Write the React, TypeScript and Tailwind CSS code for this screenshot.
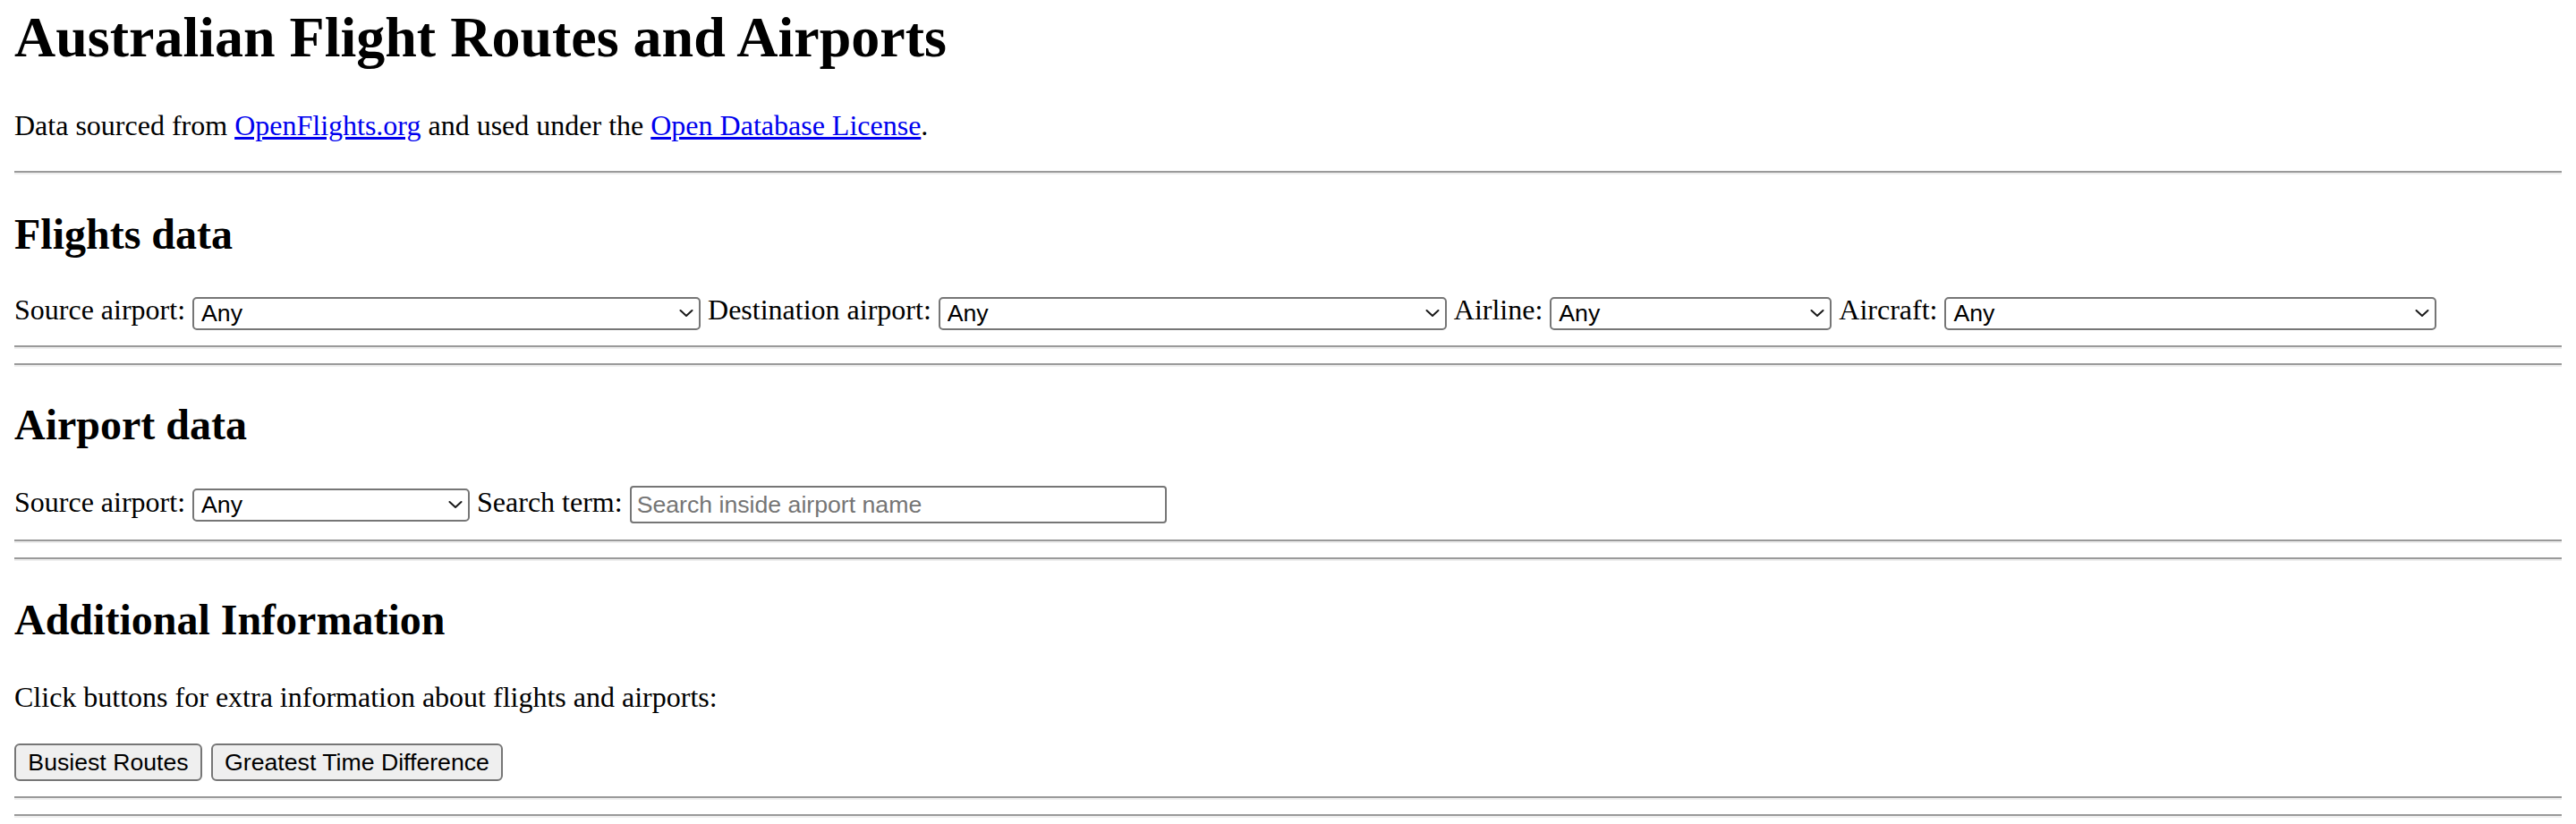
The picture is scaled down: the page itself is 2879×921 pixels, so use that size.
import React from "react";

function Chevron() {
  return (
    <svg
      className="pointer-events-none absolute right-[8px] top-1/2 h-[9px] w-[16px] -translate-y-1/2"
      viewBox="0 0 16 9"
      fill="none"
    >
      <path d="M1.5 1.5 L8 7.5 L14.5 1.5" stroke="#1a1a1a" strokeWidth="2" strokeLinecap="round" strokeLinejoin="round" />
    </svg>
  );
}

function Select({ w, mt }: { w: string; mt: string }) {
  return (
    <div className={`relative ${w} ${mt}`}>
      <select className="block h-[36.5px] w-full appearance-none rounded-[5px] border-2 border-[#767676] bg-white pl-[8px] pr-[30px] font-['Liberation_Sans',Arial,sans-serif] text-[26.67px] leading-[30px] text-black outline-none">
        <option>Any</option>
      </select>
      <Chevron />
    </div>
  );
}

function Hr({ mt }: { mt: string }) {
  return <hr className={`${mt} h-0 border-x-0 border-t-2 border-b-2 border-t-[#9a9a9a] border-b-[#eeeeee]`} />;
}

export default function App() {
  return (
    <div className="min-h-screen bg-white px-[16px] font-['Liberation_Serif','Times_New_Roman',serif] text-black">
      <h1 className="pt-[6px] text-[64px] font-bold leading-[72px]">Australian Flight Routes and Airports</h1>
      <p className="mt-[44px] text-[32px] leading-[36px]">
        Data sourced from{" "}
        <a href="#" className="text-[#0000ee] underline">
          OpenFlights.org
        </a>{" "}
        and used under the{" "}
        <a href="#" className="text-[#0000ee] underline">
          Open Database License
        </a>
        .
      </p>
      <Hr mt="mt-[33px]" />

      <h2 className="mt-[39px] text-[48px] font-bold leading-[56px]">Flights data</h2>
      <div className="mt-[38px] flex h-[42px] items-start gap-[8px] whitespace-nowrap text-[32px] leading-[36px]">
        <span>Source airport:</span>
        <Select w="w-[568px]" mt="mt-[4px]" />
        <span>Destination airport:</span>
        <Select w="w-[568px]" mt="mt-[4px]" />
        <span>Airline:</span>
        <Select w="w-[315px]" mt="mt-[4px]" />
        <span>Aircraft:</span>
        <Select w="w-[550px]" mt="mt-[4px]" />
      </div>
      <Hr mt="mt-[16px]" />
      <Hr mt="mt-[16px]" />

      <h2 className="mt-[36.5px] text-[48px] font-bold leading-[56px]">Airport data</h2>
      <div className="mt-[40.5px] flex h-[44px] items-start gap-[8px] whitespace-nowrap text-[32px] leading-[36px]">
        <span>Source airport:</span>
        <Select w="w-[310px]" mt="mt-[3px]" />
        <span>Search term:</span>
        <input
          type="text"
          placeholder="Search inside airport name"
          className="h-[42px] w-[600px] rounded-[4px] border-2 border-[#767676] bg-white px-[6px] font-['Liberation_Sans',Arial,sans-serif] text-[26.67px] text-black outline-none placeholder:text-[#757575]"
        />
      </div>
      <Hr mt="mt-[16px]" />
      <Hr mt="mt-[16px]" />

      <h2 className="mt-[38px] text-[48px] font-bold leading-[56px]">Additional Information</h2>
      <p className="mt-[39.5px] text-[32px] leading-[36px]">Click buttons for extra information about flights and airports:</p>
      <div className="mt-[32px] flex h-[45px] items-start gap-[10px]">
        <button className="mt-[2px] h-[42px] w-[210px] rounded-[6px] border-2 border-[#767676] bg-[#efefef] font-['Liberation_Sans',Arial,sans-serif] text-[26.67px] leading-[30px] text-black">
          Busiest Routes
        </button>
        <button className="mt-[2px] h-[42px] w-[326px] rounded-[6px] border-2 border-[#767676] bg-[#efefef] font-['Liberation_Sans',Arial,sans-serif] text-[26.67px] leading-[30px] text-black">
          Greatest Time Difference
        </button>
      </div>
      <Hr mt="mt-[16px]" />
      <Hr mt="mt-[16px]" />
    </div>
  );
}
